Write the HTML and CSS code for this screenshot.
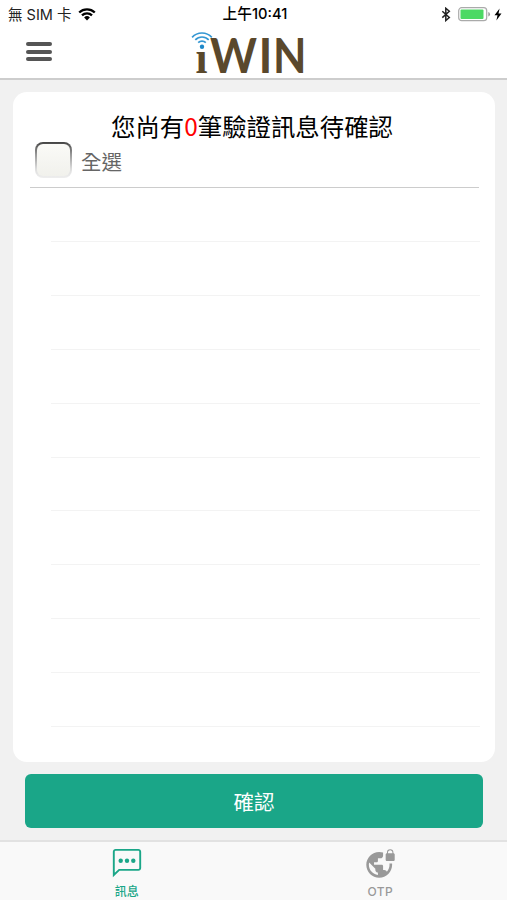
FILE: index.html
```html
<!DOCTYPE html>
<html lang="zh-Hant">
<head>
    <meta charset="UTF-8">
    <meta name="viewport" content="width=device-width, initial-scale=1.0">
    <title>iWIN</title>
    <link rel="stylesheet" href="styles.css">
</head>
<body>

    <!-- status bar -->
    <div class="status-bar">
        <div class="status-left">
            <span>無 SIM 卡</span>
            <svg class="wifi" width="18" height="13" viewBox="0 0 18 13">
                <path d="M1.2 4.5a11.2 11.2 0 0 1 15.6 0M4 7.4a7.2 7.2 0 0 1 10 0" fill="none" stroke="#000" stroke-width="2.3"/>
                <path d="M9 12.5L6.1 9.5a4.1 4.1 0 0 1 5.8 0z"/>
            </svg>
        </div>
        <div class="status-time">上午10:41</div>
        <div class="status-right">
            <svg width="10" height="15" viewBox="0 0 10 15">
                <path d="M1.3 4.3l7 6.2-3.5 3V1.3l3.5 3-7 6.3" fill="none" stroke="#222" stroke-width="1.5"/>
            </svg>
            <svg class="battery" width="33" height="15" viewBox="0 0 33 15">
                <rect x=".7" y=".7" width="28" height="13" rx="3" fill="#fff" stroke="#aaa" stroke-width="1.2"/>
                <rect x="2.5" y="2.5" width="23" height="9.4" rx="1" fill="#4cd964"/>
                <path d="M30.3 5a2.4 2.4 0 0 1 0 4.6z" fill="#999"/>
            </svg>
            <svg width="8" height="13" viewBox="0 0 8 13">
                <path d="M5.6.5L.5 7.2h3L2.4 12.5 7.5 5.5h-3z"/>
            </svg>
        </div>
    </div>

    <!-- header -->
    <header class="header">
        <button class="menu-btn" aria-label="menu">
            <span></span>
            <span></span>
            <span></span>
        </button>
        <svg class="logo" width="116" height="46" viewBox="0 0 116 46">
            <defs>
                <linearGradient id="stem" gradientUnits="userSpaceOnUse" x1="0" y1="0" x2="0" y2="46">
                    <stop offset=".41" stop-color="#5a482c" stop-opacity="0"/>
                    <stop offset=".41" stop-color="#5a482c"/>
                </linearGradient>
            </defs>
            <g class="logo-text">
                <text class="logo-i" x="4.5" y="43" textLength="12" lengthAdjust="spacingAndGlyphs" fill="url(#stem)">i</text>
                <text x="19" y="43" textLength="47" lengthAdjust="spacingAndGlyphs">W</text>
                <text x="67.5" y="43" textLength="14" lengthAdjust="spacingAndGlyphs">I</text>
                <text x="82" y="43" textLength="33.5" lengthAdjust="spacingAndGlyphs">N</text>
            </g>
            <g fill="none" stroke="#3497d3" stroke-width="1.7">
                <path d="M1.1 7.3a13.4 13.4 0 0 1 19.7 0"/>
                <path d="M4.3 9.900a9.200 9.200 0 0 1 13.400 0"/>
                <path d="M7.2 12.700a5.300 5.300 0 0 1 7.600 0"/>
            </g>
            <circle cx="11" cy="16.700" r="2.200" fill="#1e88c9"/>
        </svg>
    </header>

    <!-- message list -->
    <main class="content">
        <section class="card">
            <h1 class="title">您尚有<span class="count">0</span>筆驗證訊息待確認</h1>
            <label class="select-all">
                <span class="checkbox"><span class="checkbox-face"></span></span>
                <span>全選</span>
            </label>
            <ul class="list">
                <li></li>
                <li></li>
                <li></li>
                <li></li>
                <li></li>
                <li></li>
                <li></li>
                <li></li>
                <li></li>
                <li></li>
            </ul>
        </section>
        <button class="confirm-btn">確認</button>
    </main>

    <!-- bottom tabs -->
    <nav class="tabs">
        <div class="tab active">
            <svg width="30" height="30" viewBox="0 0 30 30">
                <path d="M3.6 1.900h22.800a1.800 1.800 0 0 1 1.800 1.800v16.400a1.800 1.800 0 0 1-1.800 1.800H7.200L1.800 27V3.700a1.800 1.800 0 0 1 1.800-1.800z" fill="none" stroke="currentColor" stroke-width="1.9"/>
                <g fill="currentColor">
                    <circle cx="8.7" cy="12.700" r="2.200"/>
                    <circle cx="15" cy="12.700" r="2.200"/>
                    <circle cx="21.3" cy="12.700" r="2.200"/>
                </g>
            </svg>
            <span>訊息</span>
        </div>
        <div class="tab">
            <svg width="31" height="31" viewBox="0 0 24 24">
                <path fill="currentColor" d="M22 4v-.5a2.5 2.5 0 0 0-5 0V4c-.55 0-1 .45-1 1v4c0 .55.45 1 1 1h5c.55 0 1-.45 1-1V5c0-.55-.45-1-1-1zm-.8 0h-3.400v-.5c0-.94.76-1.700 1.700-1.700s1.700.76 1.700 1.700V4zm-2.280 8c.04.33.08.66.08 1 0 2.080-.8 3.970-2.100 5.390-.26-.81-1-1.390-1.900-1.390h-1v-3c0-.55-.45-1-1-1H7v-2h2c.55 0 1-.45 1-1V8h2c1.100 0 2-.9 2-2V3.460c-.95-.3-1.950-.46-3-.46C5.480 3 1 7.480 1 13s4.480 10 10 10 10-4.480 10-10c0-.34-.02-.67-.05-1h-2.030zM10 20.930c-3.950-.49-7-3.850-7-7.930 0-.62.08-1.210.21-1.790L8 16v1c0 1.100.9 2 2 2v1.930z"/>
            </svg>
            <span class="otp">OTP</span>
        </div>
    </nav>

</body>
</html>
```
FILE: styles.css
```css
* {
    box-sizing: border-box;
}

body {
    margin: 0;
    height: 100vh;
    display: flex;
    flex-direction: column;
    background: #f1f1f1;
    color: #000;
    font-family: "Inter", "Noto Sans CJK TC", sans-serif;
}

button {
    border: none;
    cursor: pointer;
}

/* status bar */
.status-bar {
    display: grid;
    grid-template-columns: 1fr auto 1fr;
    align-items: center;
    height: 27px;
    padding: 0 5px 0 8px;
    background: #fff;
    line-height: 27px;
}

.status-left,
.status-right {
    display: flex;
    align-items: center;
}

.status-left {
    gap: 7px;
    color: #222;
    font-size: 14.5px;
}

.status-left span {
    padding-top: 1px;
}

.status-time {
    font-weight: 500;
    font-size: 14.7px;
}

.status-right {
    justify-content: flex-end;
    gap: 3px;
}

.battery {
    margin-left: 4px;
}

/* header */
.header {
    display: grid;
    grid-template-columns: 1fr 116px 1fr;
    align-items: start;
    height: 53px;
    padding-right: 10px;
    background: #fff;
    border-bottom: 2px solid #cdcdcd;
}

.menu-btn {
    display: flex;
    flex-direction: column;
    gap: 3.5px;
    width: 26px;
    margin: 15px 0 0 26px;
    padding: 0;
    background: none;
}

.menu-btn span {
    height: 4px;
    border-radius: 2px;
    background: #555;
}

.logo {
    margin-top: 3px;
    overflow: visible;
}

.logo-text {
    fill: #5a482c;
    font-family: "Lato", sans-serif;
    font-weight: bold;
    font-size: 47.5px;
}

.logo-i {
    font-family: "Liberation Serif", serif;
    font-size: 46px;
}

/* card */
.content {
    flex: 1;
    display: flex;
    flex-direction: column;
    padding: 12px 12px 12px 13px;
}

.card {
    height: 670px;
    padding: 18px 14px 0 17px;
    border-radius: 14px;
    background: #fff;
}

.title {
    margin: 0 0 1px;
    padding-right: 7px;
    text-align: center;
    font-family: "Noto Sans CJK TC", sans-serif;
    font-size: 24.4px;
    font-weight: 400;
    line-height: 32px;
    white-space: nowrap;
}

.count {
    color: #f00;
}

.select-all {
    display: flex;
    align-items: flex-start;
    gap: 9px;
    width: 449px;
    height: 45px;
    padding-left: 5px;
    border-bottom: 1px solid #ccc;
    color: #666;
    font-size: 20.5px;
    line-height: 39px;
}

.checkbox {
    width: 37px;
    height: 36px;
    margin-top: -1px;
    padding: 2px;
    border-radius: 8px;
    background: linear-gradient(#444, #999 35%, #ddd 75%, #eee);
}

.checkbox-face {
    display: block;
    height: 100%;
    border-radius: 6px;
    background: linear-gradient(#fafaf7, #f1f1ec);
}

.list {
    margin: 1px 0 0;
    padding: 0 1px 0 21px;
    list-style: none;
}

.list li {
    height: 53.8px;
    border-bottom: 1px solid #f3f3f3;
}

.confirm-btn {
    height: 54px;
    margin: 12px 0 0 12px;
    width: 458px;
    border-radius: 6px;
    background: #1aa688;
    color: #fff;
    font-family: "Noto Sans CJK TC", sans-serif;
    font-size: 20.5px;
}

/* tabs */
.tabs {
    display: flex;
    height: 61px;
    border-top: 2px solid #e2e2e2;
    background: #f9f9f9;
}

.tab {
    flex: 1;
    display: flex;
    flex-direction: column;
    align-items: center;
    justify-content: space-between;
    padding-top: 6px;
    color: #999;
    font-size: 12px;
    font-weight: 500;
    line-height: 17px;
}

.tab.active {
    color: #1aa688;
}

.otp {
    letter-spacing: 0.3px;
}
```
